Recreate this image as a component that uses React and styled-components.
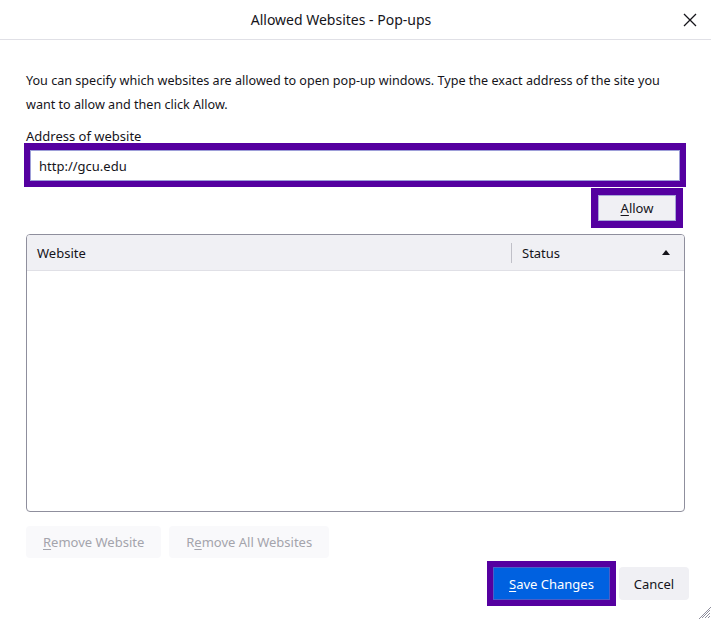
import styled, { createGlobalStyle } from "styled-components";

const GlobalStyle = createGlobalStyle`
  html, body {
    margin: 0;
    padding: 0;
    background: #ffffff;
  }
  body {
    font-family: "Noto Sans", "Open Sans", sans-serif;
    color: #15141a;
  }
`;

const Window = styled.div`
  width: 711px;
  height: 619px;
  display: flex;
  flex-direction: column;
  position: relative;
  overflow: hidden;
`;

const TitleBar = styled.div`
  height: 39px;
  border-bottom: 1px solid #e0e0e6;
  display: flex;
  align-items: center;
  padding: 0 13px 0 0;
`;

const Title = styled.div`
  flex: 1;
  text-align: center;
  font-size: 14px;
`;

const CloseButton = styled.button`
  width: 16px;
  height: 16px;
  padding: 0;
  border: none;
  background: none;
  display: flex;
  align-items: center;
  justify-content: center;
`;

const Content = styled.div`
  flex: 1;
  display: flex;
  flex-direction: column;
  padding: 29px 26px 0 26px;
`;

const Intro = styled.p`
  margin: 0;
  font-size: 12.6px;
  line-height: 24px;
`;

const Label = styled.div`
  margin-top: 11px;
  font-size: 13px;
  line-height: 16px;
`;

const Key = styled.span`
  text-decoration: underline;
  text-underline-offset: 2px;
`;

const Highlight = styled.div`
  background: #5500a0;
  padding: ${(p) => p.$pad || "6px"};
  margin: ${(p) => p.$margin || "0"};
`;

const AddressInput = styled.input`
  display: block;
  box-sizing: border-box;
  width: 100%;
  height: 31px;
  margin: 0;
  padding: 0 8px;
  border: 1px solid #9e9ed8;
  font-family: "Noto Sans", sans-serif;
  font-size: 13px;
  color: #15141a;
  background: #ffffff;
  outline: none;
`;

const AllowRow = styled.div`
  display: flex;
  justify-content: flex-end;
  margin-top: 1px;
  padding-right: 2px;
`;

const Button = styled.button`
  box-sizing: border-box;
  height: ${(p) => p.$h || "32px"};
  padding: 0 ${(p) => p.$px || "16px"};
  border-radius: 4px;
  border: 1px solid transparent;
  font-family: "Noto Sans", sans-serif;
  font-size: 13px;
  color: #15141a;
  background: #f0f0f4;
  cursor: pointer;
`;

const AllowButton = styled(Button)`
  width: 78px;
  height: 26px;
  border-radius: 0;
  border-color: #a8a8d8;
  padding: 0;
`;

const RemoveButton = styled(Button)`
  background: #f9f9fb;
  color: #a4a4ac;
  cursor: default;
`;

const PrimaryButton = styled(Button)`
  width: 117px;
  height: 33px;
  border-radius: 0;
  background: #0061e0;
  border-color: #4a5fc8;
  color: #ffffff;
  padding: 0;
`;

const Table = styled.div`
  margin-top: 6px;
  height: 278px;
  box-sizing: border-box;
  border: 1px solid #8f8f9d;
  border-radius: 4px;
  overflow: hidden;
  display: flex;
  flex-direction: column;
`;

const HeaderRow = styled.div`
  height: 35px;
  background: #f0f0f4;
  border-bottom: 1px solid #e0e0e6;
  display: grid;
  grid-template-columns: 484px 1fr;
  align-items: center;
  font-size: 13px;
`;

const HeaderCell = styled.div`
  display: flex;
  align-items: center;
  justify-content: space-between;
  padding: 0 10px;
  height: 20px;
  border-left: ${(p) => (p.$divider ? "1px solid #c0c0c8" : "none")};
`;

const SortArrow = styled.span`
  width: 0;
  height: 0;
  border-left: 4px solid transparent;
  border-right: 4px solid transparent;
  border-bottom: 5px solid #15141a;
  margin-right: 4px;
`;

const RemoveRow = styled.div`
  display: flex;
  gap: 8px;
  margin-top: 14px;
`;

const Footer = styled.div`
  display: flex;
  justify-content: flex-end;
  align-items: center;
  gap: 3px;
  margin-top: 3px;
  margin-right: -4px;
`;

const CancelButton = styled(Button)`
  width: 70px;
  height: 33px;
  padding: 0;
`;

const Grip = styled.svg`
  position: absolute;
  right: 0;
  bottom: 0;
`;

export default function App() {
  return (
    <>
      <GlobalStyle />
      <Window>
        <TitleBar>
          <Title>Allowed Websites - Pop-ups</Title>
          <CloseButton aria-label="Close">
            <svg width="14" height="14" viewBox="0 0 14 14">
              <path d="M1 1 L13 13 M13 1 L1 13" stroke="#15141a" strokeWidth="1.3" fill="none" />
            </svg>
          </CloseButton>
        </TitleBar>
        <Content>
          <Intro>
            You can specify which websites are allowed to open pop-up windows. Type the exact address of the site you
            <br />
            want to allow and then click Allow.
          </Intro>
          <Label>
            A<Key>d</Key>dress of website
          </Label>
          <Highlight $pad="7px 6px 6px 6px" $margin="-1px -1px 0 -2px">
            <AddressInput defaultValue="http://gcu.edu" />
          </Highlight>
          <AllowRow>
            <Highlight $pad="7px">
              <AllowButton>
                <Key>A</Key>llow
              </AllowButton>
            </Highlight>
          </AllowRow>
          <Table>
            <HeaderRow>
              <HeaderCell>Website</HeaderCell>
              <HeaderCell $divider>
                Status
                <SortArrow />
              </HeaderCell>
            </HeaderRow>
          </Table>
          <RemoveRow>
            <RemoveButton>
              <Key>R</Key>emove Website
            </RemoveButton>
            <RemoveButton>
              R<Key>e</Key>move All Websites
            </RemoveButton>
          </RemoveRow>
          <Footer>
            <Highlight $pad="6px">
              <PrimaryButton>
                <Key>S</Key>ave Changes
              </PrimaryButton>
            </Highlight>
            <CancelButton>Cancel</CancelButton>
          </Footer>
        </Content>
        <Grip width="12" height="12" viewBox="0 0 12 12">
          <path d="M11 3 L3 11 M11 6 L6 11 M11 9 L9 11 M12 0 L0 12" stroke="#8f8f9d" strokeWidth="1" />
        </Grip>
      </Window>
    </>
  );
}
